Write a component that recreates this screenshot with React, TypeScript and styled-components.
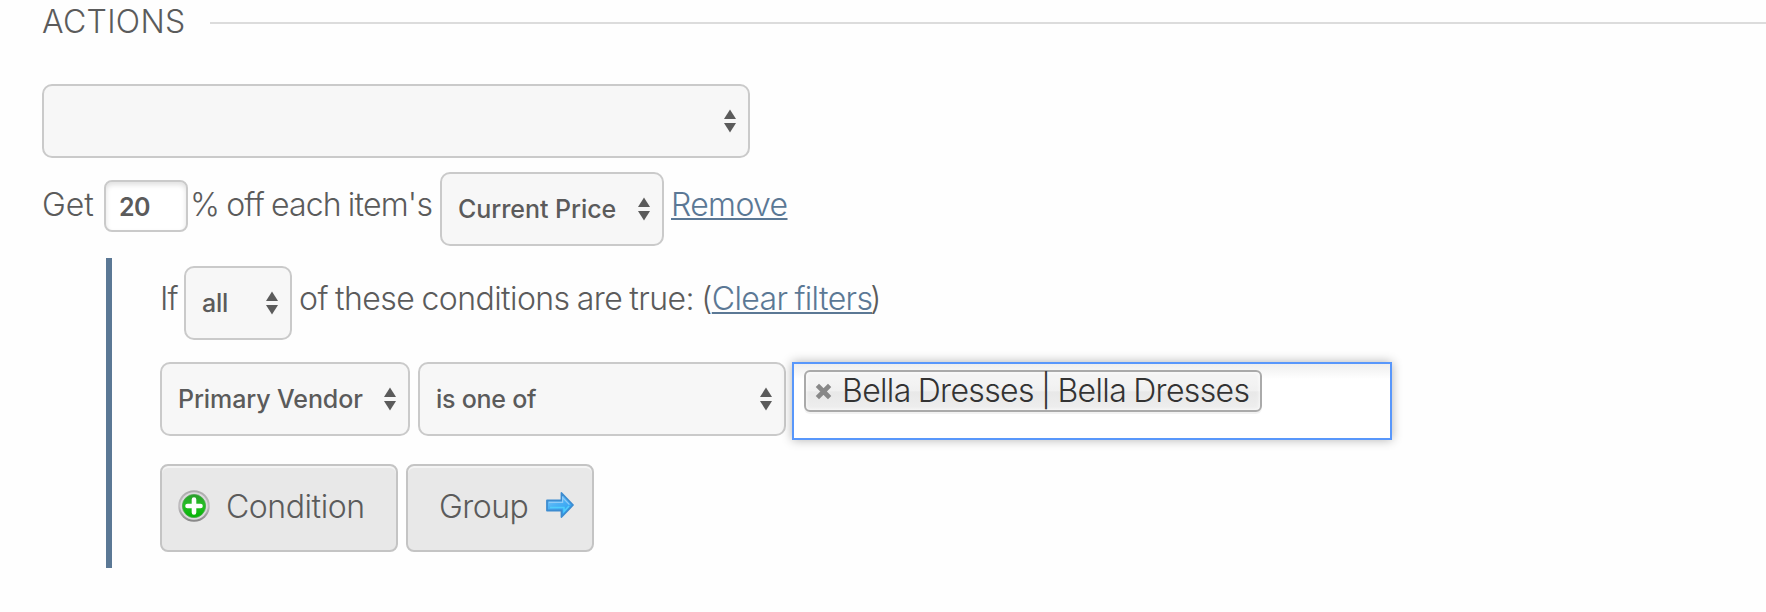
import React from "react";
import styled, { createGlobalStyle } from "styled-components";

const GlobalStyle = createGlobalStyle`
  * { box-sizing: border-box; }
  body {
    margin: 0;
    background: #fefefe;
    color: #5b5b5b;
    font-family: Inter, "Liberation Sans", sans-serif;
    font-size: 32px;
    font-weight: 330;
    line-height: 40px;
    overflow: hidden;
  }
`;

const Page = styled.main`
  width: 100%;
  height: 612px;
  padding-left: 42px;
`;

const Header = styled.header`
  display: flex;
  align-items: center;
  height: 46px;
  margin-bottom: 38px;
`;

const Title = styled.h2`
  width: 168px;
  margin: 0;
  padding-bottom: 2px;
  font-size: 32px;
  font-weight: 330;
  letter-spacing: 0.3px;
`;

const Rule = styled.div`
  flex: 1;
  height: 2px;
  background: #dcdcdc;
`;

const Row = styled.div<{ $top?: number }>`
  display: flex;
  align-items: center;
  height: 74px;
  margin-top: ${(p) => p.$top ?? 0}px;
`;

const Label = styled.span<{ $w?: number; $left?: number; $track?: number; $word?: number }>`
  flex: none;
  width: ${(p) => (p.$w ? `${p.$w}px` : "auto")};
  padding: 0 0 9px ${(p) => p.$left ?? 0}px;
  white-space: nowrap;
  letter-spacing: ${(p) => p.$track ?? 0}px;
  word-spacing: ${(p) => p.$word ?? 0}px;
`;

const Link = styled.a<{ $track?: number; $right?: number }>`
  margin-right: ${(p) => p.$right ?? 0}px;
  color: #5b7895;
  letter-spacing: ${(p) => p.$track ?? 0}px;
  text-decoration: underline;
  text-decoration-thickness: 2px;
  text-decoration-skip-ink: none;
  text-underline-offset: 2px;
  cursor: pointer;
`;

const SelectBox = styled.div<{ $w: number; $track?: number }>`
  flex: none;
  display: flex;
  align-items: center;
  justify-content: space-between;
  width: ${(p) => p.$w}px;
  height: 74px;
  padding: 0 12px 0 16px;
  border: 2px solid #cacaca;
  border-radius: 10px;
  background: #f7f7f7;
  font-size: 25px;
  font-weight: 500;
  letter-spacing: ${(p) => p.$track ?? 0}px;
  white-space: nowrap;
`;

const Stepper = styled.svg`
  flex: none;
  display: block;
`;

const NumberBox = styled.div`
  flex: none;
  display: flex;
  align-items: center;
  width: 84px;
  height: 52px;
  margin-bottom: 6px;
  padding: 2px 0 0 13px;
  border: 2px solid #cacaca;
  border-radius: 8px;
  background: #fff;
  box-shadow: inset 0 3px 5px rgba(0, 0, 0, 0.12);
  font-size: 25px;
  font-weight: 560;
  letter-spacing: -0.5px;
`;

const Filters = styled.section`
  margin: 12px 0 0 64px;
  height: 310px;
  padding: 8px 0 16px 48px;
  border-left: 6px solid #5b7895;
`;

const Conditions = styled.div`
  display: flex;
  align-items: flex-start;
  height: 78px;
  margin: 22px 0 24px;
`;

const Selects = styled.div`
  display: flex;
  gap: 8px;
`;

const TokenField = styled.div`
  width: 600px;
  height: 78px;
  margin-left: 6px;
  padding: 6px 10px;
  border: 2px solid #5897fb;
  background: linear-gradient(#eee, #fff 15px);
  box-shadow: 0 0 10px rgba(0, 0, 0, 0.3);
`;

const Token = styled.div`
  display: flex;
  align-items: center;
  width: 458px;
  height: 42px;
  padding-left: 9px;
  border: 2px solid #aaa;
  border-radius: 6px;
  background: linear-gradient(#f4f4f4 20%, #f0f0f0 50%, #e8e8e8 52%, #eee);
  background-clip: padding-box;
  box-shadow: inset 0 0 4px #fff, 0 2px 0 rgba(0, 0, 0, 0.05);
  color: #333;
`;

const TokenText = styled.span`
  margin-left: 10px;
  letter-spacing: -0.65px;
  word-spacing: -1.2px;
  white-space: nowrap;
`;

const Actions = styled.div`
  display: flex;
  gap: 8px;
`;

const Button = styled.button<{ $w: number; $left: number; $track: number }>`
  display: flex;
  align-items: center;
  width: ${(p) => p.$w}px;
  height: 88px;
  padding: 0 0 3px ${(p) => p.$left}px;
  border: 2px solid #c4c4c4;
  border-radius: 8px;
  background: #e8e8e8;
  box-shadow: inset 0 2px 0 #f4f4f4;
  color: #5b5b5b;
  font: inherit;
  letter-spacing: ${(p) => p.$track}px;
`;

const Icon = styled.svg<{ $left?: number; $right?: number; $bottom?: number }>`
  flex: none;
  display: block;
  margin: 0 ${(p) => p.$right ?? 0}px ${(p) => p.$bottom ?? 0}px ${(p) => p.$left ?? 0}px;
`;

function Select({ width, track, children }: { width: number; track?: number; children?: React.ReactNode }) {
  return (
    <SelectBox $w={width} $track={track}>
      <span>{children}</span>
      <Stepper width="12" height="24" viewBox="0 0 12 24" fill="#5b5b5b">
        <path d="M6 .5 12 10H0z" />
        <path d="M0 14h12L6 23.5z" />
      </Stepper>
    </SelectBox>
  );
}

function AddIcon() {
  return (
    <Icon width="32" height="32" viewBox="0 0 32 32" $right={16} $bottom={1}>
      <defs>
        <linearGradient id="ring" x1="0" y1="0" x2="0" y2="1">
          <stop offset="0" stopColor="#aaa" />
          <stop offset=".5" stopColor="#c2bfc2" />
          <stop offset="1" stopColor="#858585" />
        </linearGradient>
        <linearGradient id="disc" x1="0" y1="0" x2="0" y2="1">
          <stop offset="0" stopColor="#2a9d2c" />
          <stop offset=".45" stopColor="#25bf25" />
          <stop offset="1" stopColor="#03b303" />
        </linearGradient>
      </defs>
      <circle cx="16" cy="16" r="15.8" fill="url(#ring)" />
      <circle cx="16" cy="16" r="13.8" fill="#dcd9dd" />
      <circle cx="16" cy="16" r="11.6" fill="url(#disc)" stroke="#4aa84b" strokeWidth=".8" />
      <path d="M16 9.500v13M9.500 16h13" stroke="#fff" strokeWidth="4.600" strokeLinecap="round" />
    </Icon>
  );
}

function ArrowIcon() {
  return (
    <Icon width="30" height="30" viewBox="0 0 30 30" $left={17} $bottom={3}>
      <defs>
        <linearGradient id="arrow" x1="0" y1="0" x2=".6" y2="1">
          <stop offset="0" stopColor="#8fcbf8" />
          <stop offset=".5" stopColor="#4db2f5" />
          <stop offset="1" stopColor="#2a9cf0" />
        </linearGradient>
      </defs>
      <path d="M2 10.500h14.500V3L28 15 16.500 27v-6.500H2z" fill="url(#arrow)" stroke="#3d8cd0" strokeWidth="1.800" strokeLinejoin="round" />
      <path d="M4 12.400h13.600V7.500l6.800 7.200" fill="none" stroke="#8fcbf8" strokeWidth="1.200" />
      <path d="M5 17.500h14v4l5-5.500" fill="none" stroke="#4fcdfb" strokeWidth="1.500" />
    </Icon>
  );
}

export default function App() {
  return (
    <>
      <GlobalStyle />
      <Page>
        <Header>
          <Title>ACTIONS</Title>
          <Rule />
        </Header>
        <Select width={708} />
        <Row $top={14}>
          <Label $w={62} $track={-0.1}>Get</Label>
          <NumberBox>20</NumberBox>
          <Label $w={252} $left={2} $track={-0.8} $word={-1.2}>
            % off each item's
          </Label>
          <Select width={224} track={-0.05}>Current Price</Select>
          <Label $left={7}>
            <Link $track={-0.65}>Remove</Link>
          </Label>
        </Row>
        <Filters>
          <Row>
            <Label $w={24} $track={-0.8}>If</Label>
            <Select width={108} track={-0.2}>all</Select>
            <Label $left={7} $track={-0.57} $word={-1.2}>
              of these conditions are true: (
              <Link $track={-0.65} $right={-2}>Clear filters</Link>)
            </Label>
          </Row>
          <Conditions>
            <Selects>
              <Select width={250} track={-0.1}>Primary Vendor</Select>
              <Select width={368} track={-0.25}>is one of</Select>
            </Selects>
            <TokenField>
              <Token>
                <Icon width="17" height="17" viewBox="0 0 17 17" stroke="#888" strokeWidth="4.6" strokeLinecap="square">
                  <path d="m4 4 9 9M13 4l-9 9" />
                </Icon>
                <TokenText>Bella Dresses | Bella Dresses</TokenText>
              </Token>
            </TokenField>
          </Conditions>
          <Actions>
            <Button $w={238} $left={16} $track={-0.45}>
              <AddIcon />
              Condition
            </Button>
            <Button $w={188} $left={31} $track={-0.5}>
              Group
              <ArrowIcon />
            </Button>
          </Actions>
        </Filters>
      </Page>
    </>
  );
}
